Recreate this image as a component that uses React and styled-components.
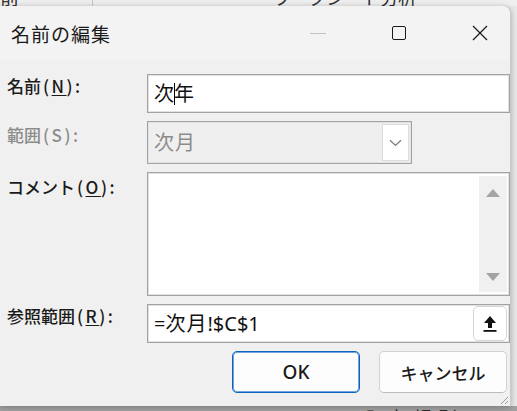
import React from 'react'
import styled, { createGlobalStyle } from 'styled-components'

const GlobalStyle = createGlobalStyle`
  html, body {
    margin: 0;
    padding: 0;
  }
  body {
    background: #e9e9e9;
    font-family: "Noto Sans", "Noto Sans CJK JP", sans-serif;
    color: #1a1a1a;
  }
`

const Page = styled.div`
  width: 517px;
  height: 411px;
  overflow: hidden;
  display: flex;
  flex-direction: column;
  background: #e9e9e9;
`

const TopStrip = styled.div`
  height: 6px;
  flex: none;
  overflow: hidden;
  display: flex;
  align-items: flex-end;
  background: #efefef;
`
const Cell = styled.div`
  width: ${p => p.w}px;
  flex: none;
  height: 20px;
  display: flex;
  align-items: flex-end;
  font-family: "Noto Sans CJK JP", sans-serif;
  font-size: 19px;
  line-height: 19px;
  color: #333;
  border-right: ${p => (p.line ? '1px solid #c6c6c6' : 'none')};
  box-sizing: border-box;
  letter-spacing: ${p => p.spacing || 0}px;
  white-space: nowrap;
`

const Middle = styled.div`
  display: flex;
  height: 400px;
  flex: none;
`

const Dialog = styled.div`
  position: relative;
  width: 511px;
  flex: none;
  display: flex;
  flex-direction: column;
  background: #f0f0f0;
  border-radius: 0 8px 0 0;
  border-right: 1px solid #c9c9c9;
  box-sizing: border-box;
  box-shadow: 0 1px 6px rgba(0, 0, 0, 0.28);
`

const TitleBar = styled.div`
  height: 54px;
  flex: none;
  display: flex;
  align-items: center;
  padding-left: 11px;
  background: #f3f3f3;
  border-radius: 0 8px 0 0;
`
const Title = styled.div`
  font-family: "Noto Sans CJK JP", sans-serif;
  font-size: 19px;
  letter-spacing: 1px;
  color: #1a1a1a;
`
const Controls = styled.div`
  margin-left: auto;
  display: flex;
  gap: 35px;
  padding-right: 7px;
`
const CtlButton = styled.div`
  width: 46px;
  height: 54px;
  display: flex;
  align-items: center;
  justify-content: center;
`
const MinLine = styled.div`
  width: 16px;
  height: 1px;
  background: #c4c4c4;
`
const MaxBox = styled.div`
  width: 12px;
  height: 12px;
  border: 1.4px solid #1a1a1a;
  border-radius: 2px;
`

const Body = styled.div`
  flex: 1;
  display: grid;
  grid-template-columns: 140px 1fr;
  grid-template-rows: 39px 43px 124px 39px 42px;
  row-gap: 8px;
  padding: 14px 0 0 7px;
`

const Label = styled.div`
  font-family: "Noto Sans CJK JP", sans-serif;
  font-size: 17px;
  font-weight: 500;
  line-height: 24px;
  padding-top: ${p => p.top || 0}px;
  color: ${p => (p.disabled ? '#8c8c8c' : '#1b1b1b')};
  white-space: nowrap;
`
const Key = styled.span`
  letter-spacing: 2.5px;
  margin-left: 2px;
`
const U = styled.span`
  text-decoration: underline;
  text-underline-offset: 2px;
  text-decoration-thickness: 1px;
`

const Field = styled.div`
  box-sizing: border-box;
  width: ${p => p.w || '100%'};
  height: 100%;
  display: flex;
  align-items: ${p => (p.top ? 'stretch' : 'center')};
  background: ${p => (p.disabled ? '#efefef' : '#ffffff')};
  border: 1px solid #a2a2a2;
  box-shadow: inset 0 0 0 1px #e2e2e2;
`
const FieldText = styled.div`
  padding-left: 6px;
  font-size: 20px;
  line-height: 24px;
  color: ${p => (p.disabled ? '#8c8c8c' : '#111')};
  white-space: nowrap;
`
const Kanji = styled.span`
  font-family: "Noto Sans CJK JP", sans-serif;
  letter-spacing: 1px;
`
const Caret = styled.span`
  display: inline-block;
  width: 1px;
  height: 22px;
  background: #000;
  vertical-align: -4px;
  margin: 0 -1px 0 -1px;
`

const DropButton = styled.div`
  margin: 2px 2px 2px auto;
  align-self: stretch;
  width: 27px;
  box-sizing: border-box;
  background: #fff;
  border: 1px solid #dcdcdc;
  display: flex;
  align-items: center;
  justify-content: center;
`

const ScrollBar = styled.div`
  margin: 3px 2px 3px auto;
  width: 28px;
  background: #f0f0f0;
  display: flex;
  flex-direction: column;
  align-items: center;
  justify-content: space-between;
  padding: 13px 0 11px;
  box-sizing: border-box;
`
const Arrow = styled.div`
  width: 0;
  height: 0;
  border-left: 7px solid transparent;
  border-right: 7px solid transparent;
  border-bottom: ${p => (p.down ? 'none' : '8px solid #a4a4a4')};
  border-top: ${p => (p.down ? '8px solid #a4a4a4' : 'none')};
`

const RefButton = styled.div`
  margin: 1px 2px 1px auto;
  align-self: stretch;
  width: 34px;
  box-sizing: border-box;
  background: #fff;
  border: 1px solid #d4d4d4;
  border-radius: 5px;
  display: flex;
  align-items: center;
  justify-content: center;
`

const ButtonRow = styled.div`
  grid-column: 1 / -1;
  display: flex;
  justify-content: flex-end;
  gap: 19px;
  padding-right: 3px;
`
const Button = styled.div`
  width: 128px;
  box-sizing: border-box;
  border-radius: 5px;
  background: #fdfdfd;
  display: flex;
  align-items: center;
  justify-content: center;
  font-family: "Noto Sans", "Noto Sans CJK JP", sans-serif;
  font-size: ${p => (p.primary ? 19 : 17)}px;
  font-weight: 500;
  color: #1a1a1a;
  border: 1px solid ${p => (p.primary ? '#0a66bd' : '#d2d2d2')};
  border-bottom-color: ${p => (p.primary ? '#0a66bd' : '#bcbcbc')};
  box-shadow: ${p => (p.primary ? 'inset 0 0 0 1px #6ea6dc' : 'none')};
`

const Grip = styled.svg`
  position: absolute;
  right: 1px;
  bottom: 1px;
`

const BottomStrip = styled.div`
  flex: 1;
  background: #a2a2a2;
  display: flex;
  align-items: flex-start;
  overflow: hidden;
`
const BottomText = styled.div`
  margin-left: 363px;
  margin-top: 2px;
  font-family: "Noto Sans CJK JP", sans-serif;
  font-size: 19px;
  line-height: 19px;
  letter-spacing: 6px;
  color: #2a2a2a;
  white-space: nowrap;
`

function Chevron() {
  return (
    <svg width="13" height="8" viewBox="0 0 13 8">
      <path d="M1 1.2 L6.5 6.4 L12 1.2" fill="none" stroke="#7a7a7a" strokeWidth="1.3" />
    </svg>
  )
}

function CloseIcon() {
  return (
    <svg width="16" height="16" viewBox="0 0 16 16">
      <path d="M1 1 L15 15 M15 1 L1 15" stroke="#1a1a1a" strokeWidth="1.3" />
    </svg>
  )
}

function CollapseIcon() {
  return (
    <svg width="14" height="18" viewBox="0 0 14 18">
      <path d="M7 1 L13 8 L9 8 L9 13 L5 13 L5 8 L1 8 Z" fill="#111" />
      <rect x="0.5" y="15" width="13" height="1.8" fill="#111" />
    </svg>
  )
}

export default function App() {
  return (
    <Page>
      <GlobalStyle />
      <TopStrip>
        <Cell w={93} line>前</Cell>
        <Cell w={179} />
        <Cell w={160} spacing={-1}>ワークシート分析</Cell>
      </TopStrip>

      <Middle>
        <Dialog>
          <TitleBar>
            <Title>名前の編集</Title>
            <Controls>
              <CtlButton><MinLine /></CtlButton>
              <CtlButton><MaxBox /></CtlButton>
              <CtlButton><CloseIcon /></CtlButton>
            </Controls>
          </TitleBar>

          <Body>
            <Label>名前<Key>(<U>N</U>):</Key></Label>
            <Field>
              <FieldText><Kanji>次<Caret />年</Kanji></FieldText>
            </Field>

            <Label disabled top={2}>範囲<Key>(S):</Key></Label>
            <Field w="265px" disabled>
              <FieldText disabled><Kanji>次月</Kanji></FieldText>
              <DropButton><Chevron /></DropButton>
            </Field>

            <Label top={3}>コメント<Key>(<U>O</U>):</Key></Label>
            <Field top>
              <ScrollBar>
                <Arrow />
                <Arrow down />
              </ScrollBar>
            </Field>

            <Label>参照範囲<Key>(<U>R</U>):</Key></Label>
            <Field>
              <FieldText>=<Kanji>次月</Kanji>!$C$1</FieldText>
              <RefButton><CollapseIcon /></RefButton>
            </Field>

            <ButtonRow>
              <Button primary>OK</Button>
              <Button>キャンセル</Button>
            </ButtonRow>
          </Body>

          <Grip width="9" height="9" viewBox="0 0 9 9">
            <path d="M8 1 L1 8 M8 5 L5 8" stroke="#9a9a9a" strokeWidth="1" />
          </Grip>
        </Dialog>
      </Middle>

      <BottomStrip>
        <BottomText>入力規則</BottomText>
      </BottomStrip>
    </Page>
  )
}
